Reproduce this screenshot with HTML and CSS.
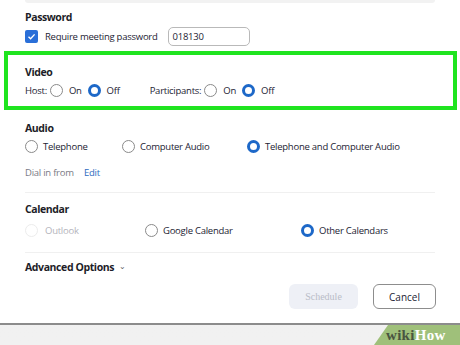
FILE: index.html
```html
<!DOCTYPE html>
<html>
<head>
  <title>Schedule Meeting</title>
  <link rel="stylesheet" href="styles.css">
</head>
<body>
  <div class="dialog">
    <div class="top-edge"></div>

    <div class="section password">
      <div class="title">Password</div>
      <div class="row">
        <span class="checkbox">
          <svg width="9" height="9" viewBox="0 0 9 9"><path d="M1.5 4.7 L3.6 6.8 L7.6 2.4" fill="none" stroke="#fff" stroke-width="1.4"/></svg>
        </span>
        <span class="label">Require meeting password</span>
        <span class="pw-input">018130</span>
      </div>
    </div>

    <div class="highlight">
      <div class="title">Video</div>
      <div class="row video-row">
        <span class="label">Host:</span>
        <span class="radio"></span><span class="label">On</span>
        <span class="radio checked"></span><span class="label">Off</span>
        <span class="label participants">Participants:</span>
        <span class="radio"></span><span class="label">On</span>
        <span class="radio checked"></span><span class="label">Off</span>
      </div>
    </div>

    <div class="section audio">
      <div class="title">Audio</div>
      <div class="options audio-opts">
        <div class="opt"><span class="radio"></span><span class="label">Telephone</span></div>
        <div class="opt"><span class="radio"></span><span class="label">Computer Audio</span></div>
        <div class="opt"><span class="radio checked"></span><span class="label">Telephone and Computer Audio</span></div>
      </div>
      <div class="dial">
        <span class="muted">Dial in from</span>
        <a class="link">Edit</a>
      </div>
    </div>

    <div class="divider"></div>

    <div class="section calendar">
      <div class="title">Calendar</div>
      <div class="options cal-opts">
        <div class="opt disabled"><span class="radio"></span><span class="label">Outlook</span></div>
        <div class="opt"><span class="radio"></span><span class="label">Google Calendar</span></div>
        <div class="opt"><span class="radio checked"></span><span class="label">Other Calendars</span></div>
      </div>
    </div>

    <div class="divider second"></div>

    <div class="section advanced">
      <div class="title">Advanced Options <span class="chevron">&#8964;</span></div>
    </div>

    <div class="actions">
      <button class="btn schedule">Schedule</button>
      <button class="btn cancel">Cancel</button>
    </div>
  </div>

  <div class="watermark">
    <span class="wiki">wiki</span><span class="how">How</span>
  </div>
</body>
</html>
```

FILE: styles.css
```css
body {
  margin: 0;
  width: 460px;
  height: 345px;
  overflow: hidden;
  position: relative;
  background: linear-gradient(#d9d9d9, #efefef 6px, #f1f1f1);
  font-family: "Open Sans", "Noto Sans", sans-serif;
  font-size: 9.5px;
  letter-spacing: -0.25px;
  color: #232333;
}
.dialog {
  background: #fff;
  height: 323px;
  border-bottom: 2px solid #8c8c8c;
  box-sizing: content-box;
}
.top-edge {
  height: 3px;
  margin: 0 25px;
  background: #f2f2f2;
  border-radius: 0 0 40px 40px;
}
.section {
  padding-left: 25px;
}
.title {
  font-weight: bold;
  font-size: 10.5px;
  letter-spacing: -0.4px;
  line-height: 14px;
  color: #1d1d28;
}
.row {
  display: flex;
  align-items: center;
}
.label {
  white-space: nowrap;
}
.password .title {
  margin-top: 7px;
}
.password .row {
  margin-top: 3px;
  height: 19px;
}
.checkbox {
  width: 13px;
  height: 13px;
  border-radius: 2px;
  background: #2a6fd8;
  display: flex;
  align-items: center;
  justify-content: center;
  margin-right: 7px;
}
.pw-input {
  margin-left: 10px;
  width: 76px;
  height: 17px;
  border: 1px solid #b9b9b9;
  border-radius: 5px;
  padding-left: 4px;
  line-height: 17px;
}
.highlight {
  margin: 5px 3px 0 4px;
  border: 4px solid #1fe41f;
  height: 51px;
  padding-left: 17px;
}
.highlight .title {
  margin-top: 10px;
}
.video-row {
  margin-top: 5px;
}
.radio {
  width: 13px;
  height: 13px;
  box-sizing: border-box;
  border: 1px solid #8a8a8a;
  border-radius: 50%;
  background: #fff;
  flex: none;
}
.radio.checked {
  border: 3px solid #1d68c8;
}
.video-row .radio {
  margin: 0 6px 0 3px;
}
.video-row .radio + .label + .radio {
  margin-left: 6px;
}
.video-row .participants {
  margin-left: 30px;
}
.audio .title {
  margin-top: 11px;
}
.options {
  display: grid;
  align-items: center;
  margin-top: 5px;
}
.audio-opts {
  grid-template-columns: 97px 125px auto;
}
.cal-opts {
  grid-template-columns: 120px 156px auto;
  margin-top: 8px;
}
.opt {
  display: flex;
  align-items: center;
}
.opt .radio {
  margin-right: 5px;
}
.opt.disabled .radio {
  border-color: #ececec;
}
.opt.disabled .label {
  color: #b4b4bc;
  margin-left: 2px;
}
.dial {
  margin-top: 13px;
}
.muted {
  color: #7a7a85;
}
.link {
  color: #2d6cc0;
  margin-left: 8px;
}
.divider {
  height: 1px;
  background: #f0f0f0;
  margin: 13px 25px 0 25px;
}
.calendar .title {
  margin-top: 9px;
}
.divider.second {
  margin-top: 15px;
}
.advanced .title {
  margin-top: 7px;
}
.chevron {
  font-weight: normal;
  font-size: 8px;
  color: #666;
  margin-left: 3px;
  position: relative;
  top: -2px;
}
.actions {
  display: flex;
  justify-content: flex-end;
  gap: 15px;
  padding-right: 24px;
  margin-top: 9px;
}
.btn {
  height: 25px;
  border-radius: 6px;
  font-size: 10px;
  padding: 0;
}
.schedule {
  width: 69px;
  background: #eef0f6;
  border: none;
  color: #b9bcc7;
  font-family: "Liberation Serif", serif;
}
.cancel {
  width: 63px;
  background: #fff;
  border: 1px solid #8d8d8d;
  color: #232333;
  font-family: "Open Sans", sans-serif;
}
.watermark {
  position: absolute;
  right: 0;
  bottom: 0;
  width: 86px;
  height: 20px;
  background: #9fc07a;
  clip-path: polygon(14px 0, 100% 0, 100% 100%, 0 100%);
  font-family: "Liberation Serif", serif;
  font-weight: bold;
  font-size: 15px;
  line-height: 20px;
  padding-left: 12px;
  box-sizing: border-box;
  letter-spacing: 0.3px;
}
.wiki {
  color: #4a5540;
}
.how {
  color: #fff;
}
```
